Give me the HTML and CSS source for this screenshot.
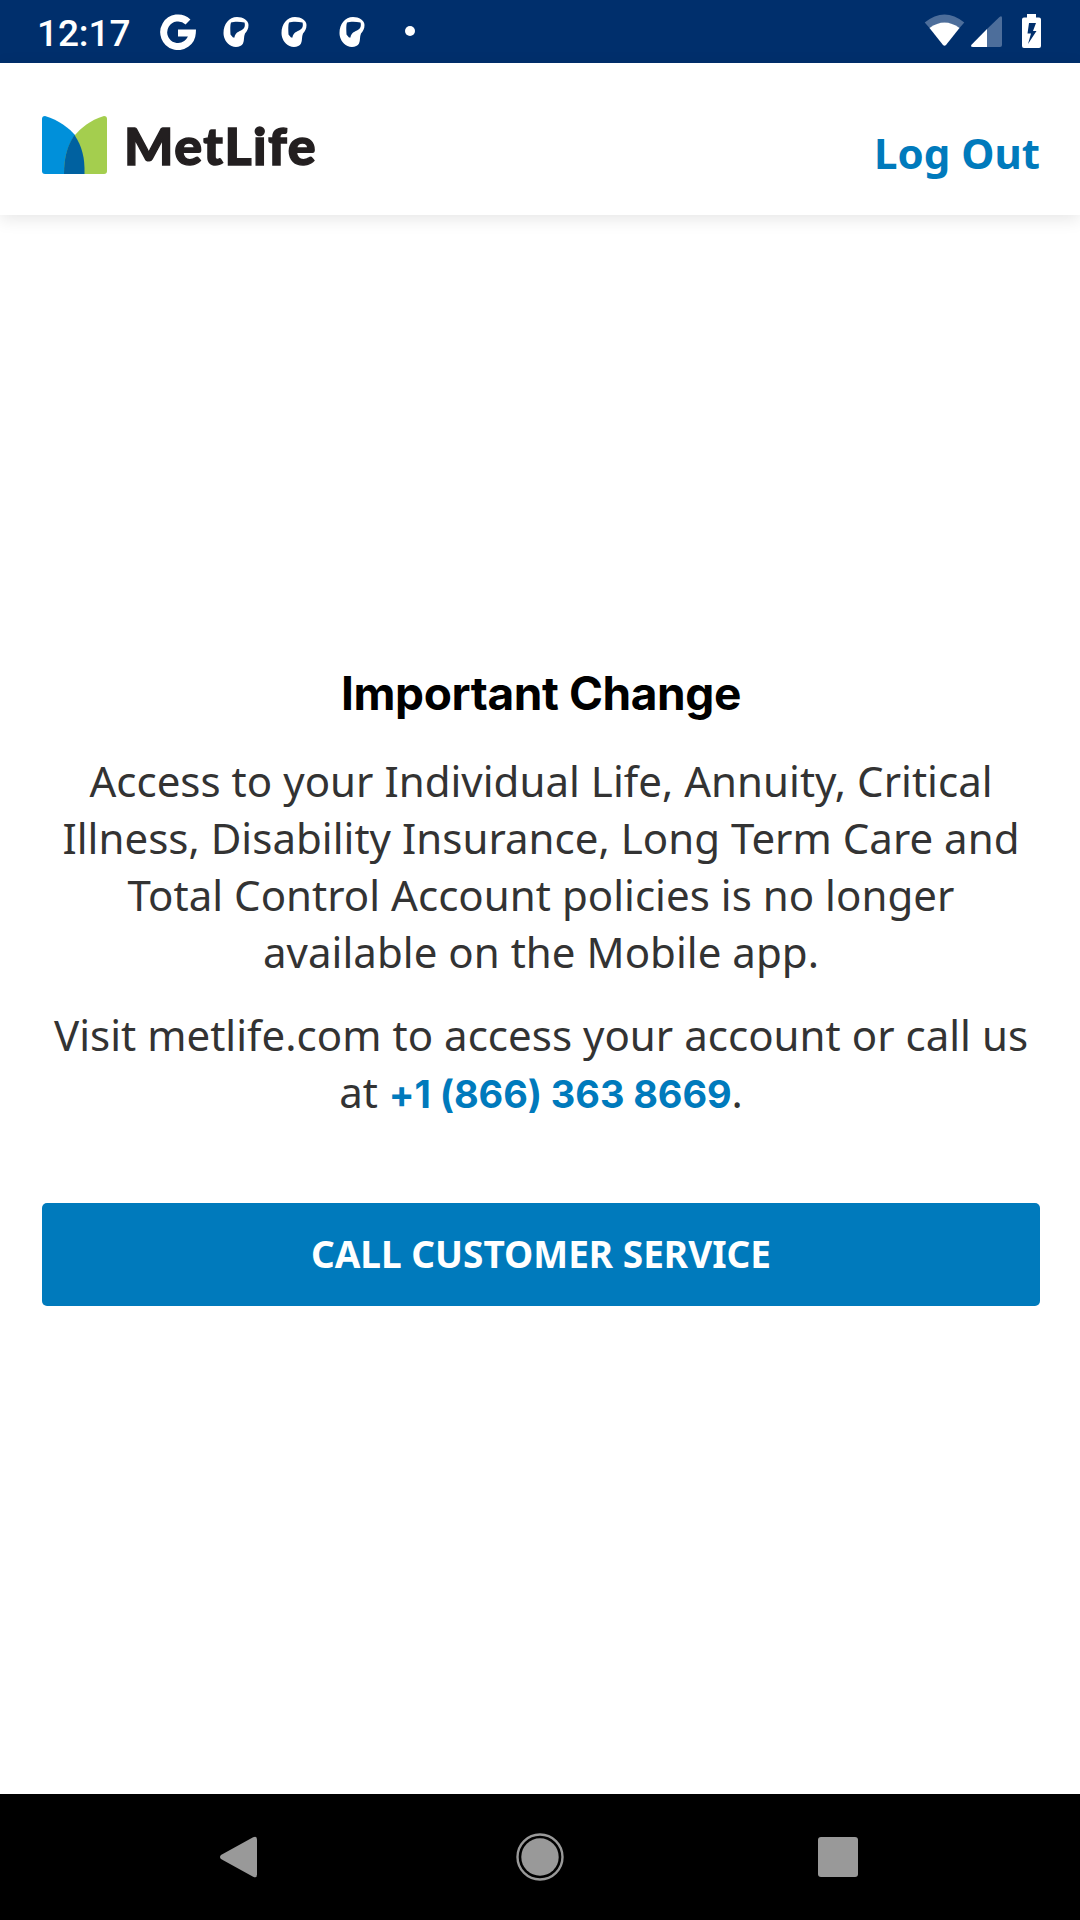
FILE: index.html
```html
<!DOCTYPE html>
<html lang="en">
<head>
<meta charset="utf-8">
<title>MetLife</title>
<link rel="stylesheet" href="styles.css">
</head>
<body>
<svg class="defs" width="0" height="0" aria-hidden="true">
  <symbol id="notice" viewBox="0 0 28 32">
    <path fill="#fff" fill-rule="evenodd" d="M15 1C21 1 26.500 4.500 26.500 9C26.500 13 25 15 23 17.500C21.500 21 22.500 24 21 27.500C19.500 30.500 14 32 9.500 30C4.500 27.500 1.500 22.500 1.500 17C1.500 8 7 1 15 1ZM9 6.500C8 9 8.300 14 8.500 18.500L11 21.500H12.500C13 17.500 15.500 16 19 14.500C22.500 13 23.500 10 22.500 6.500C18 5.500 12 5.500 9 6.500Z"/>
  </symbol>
</svg>
<div class="screen">
  <div class="status">
    <span class="time">12:17</span>
    <svg class="google" viewBox="0 0 36 36"><path fill="none" stroke="#fff" stroke-width="7" d="M28 8A14.300 14.300 0 1 0 32.300 19H18"/></svg>
    <svg class="notice"><use href="#notice"/></svg>
    <svg class="notice"><use href="#notice"/></svg>
    <svg class="notice"><use href="#notice"/></svg>
    <span class="dot"></span>
    <svg class="system" viewBox="0 0 120 36">
      <path fill="#4d6e9b" d="M.7 8.500Q20.500-7.500 40.300 8.500L35 14.500Q20.500 3 6 14.500Z"/>
      <path fill="#fff" d="M5.500 14Q20.500 3 35.500 14L22 31Q20.500 32.500 19 31Z"/>
      <path fill="#4d6e9b" d="M63 15V33H76Q78 33 78 31V4Q78 1 75.500 3Z"/>
      <path fill="#fff" d="M63 15V33H49Q46 33 47.500 30.800Z"/>
      <path fill="#fff" fill-rule="evenodd" d="M103 0H112V3.500H115Q117 3.500 117 5.500V32Q117 34 115 34H100Q98 34 98 32V5.500Q98 3.500 100 3.500H103ZM105 9L103.500 19.500H107L104 30L112.500 17H109L112 9Z"/>
    </svg>
  </div>
  <header class="header">
    <div class="brand">
      <svg class="mark" viewBox="0 0 65 58">
        <path fill="#0090da" d="M3 0C17 4 28 13 33 19C40 30 43 40 42.500 58H3Q0 58 0 55V3Q0 0 3 0Z"/>
        <path fill="#a4ce4e" d="M62 0C48 4 38 13 33 19C25 30 22 42 22 58H62Q65 58 65 55V3Q65 0 62 0Z"/>
        <path fill="#0061a0" d="M32.500 19C40 30 43 42 42.500 58H22C22 42 25 30 32.500 19Z"/>
      </svg>
      <span class="name">MetLife</span>
    </div>
    <a class="logout">Log Out</a>
  </header>
  <main class="content">
    <h1 class="title">Important Change</h1>
    <p class="copy">Access to your Individual Life, Annuity, Critical<br>Illness, Disability Insurance, Long Term Care and<br>Total Control Account policies is no longer<br>available on the Mobile app.</p>
    <p class="copy">Visit metlife.com to access your account or call us<br>at <a class="phone">+1 (866) 363 8669</a>.</p>
    <button class="call">CALL CUSTOMER SERVICE</button>
  </main>
  <nav class="nav">
    <svg class="back" viewBox="0 0 38 42"><path fill="#999" d="M1 19L34 .8Q38-1 38 3V39Q38 43 34 41.200L1 23Q-1 21 1 19Z"/></svg>
    <svg class="home" viewBox="0 0 48 48"><circle cx="24" cy="24" r="22.500" fill="none" stroke="#999" stroke-width="2.400"/><circle cx="24" cy="24" r="18.700" fill="#999"/></svg>
    <span class="recent"></span>
  </nav>
</div>
</body>
</html>
```
FILE: styles.css
```css
* { box-sizing: border-box; }
body { margin: 0; background: #fff; }
.defs { display: none; }
.screen { display: flex; flex-direction: column; width: 1080px; height: 1920px; overflow: hidden; font-family: "Noto Sans", sans-serif; }
.status { display: flex; align-items: flex-start; height: 63px; flex: none; padding: 14px 36px 0 37px; background: #002f6c; }
.time { width: 123px; font: 500 37px/39px Roboto, sans-serif; letter-spacing: -.1px; color: #fff; }
.google { width: 36px; height: 36px; margin-right: 26px; }
.notice { width: 28px; height: 32px; margin: 2px 30px 0 0; }
.dot { width: 10px; height: 10px; margin-top: 12px; margin-left: 9px; border-radius: 50%; background: #fff; }
.system { width: 120px; height: 36px; margin-left: auto; }
.header { display: flex; justify-content: space-between; height: 152px; flex: none; padding: 53px 40px 0 42px; background: #fff; box-shadow: 0 4px 16px rgba(0,0,0,.1); }
.brand { display: flex; gap: 17px; }
.mark { width: 65px; height: 58px; }
.name { font: 900 52px/58px Lato, sans-serif; letter-spacing: 1.5px; color: #231f20; -webkit-text-stroke: 1.4px #231f20; }
.logout { margin-top: 8px; font-size: 42px; font-weight: 700; line-height: 57px; color: #007abc; }
.content { display: flex; flex-direction: column; flex: 1; padding: 449px 40px 0 42px; text-align: center; }
.title { margin: 0; font: 700 46px/58px Inter, sans-serif; letter-spacing: -.4px; color: #000; }
.copy { margin: 30px -20px 0; font-size: 42px; line-height: 57px; letter-spacing: .03px; color: #333; white-space: nowrap; }
.copy + .copy { margin-top: 26px; }
.phone { font: 700 38px/50px Inter, sans-serif; letter-spacing: -.1px; color: #007abc; }
.call { height: 103px; margin: 83px 0 0; padding: 0 0 2px; border: 0; border-radius: 5px; background: #007abc; color: #fff; font: 700 37px/52px "Noto Sans", sans-serif; }
.nav { display: flex; justify-content: space-between; align-items: center; height: 126px; flex: none; padding: 0 222px 0 220px; background: #000; }
.back { width: 37px; height: 42px; }
.home { width: 48px; height: 48px; margin-left: 4px; }
.recent { width: 40px; height: 40px; border-radius: 3px; background: #999; }
```
